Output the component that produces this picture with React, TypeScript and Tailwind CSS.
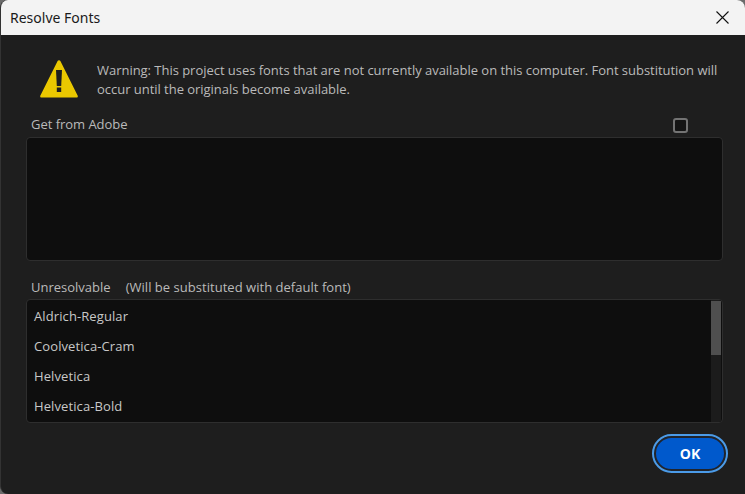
const fontStack = "font-['Open_Sans',sans-serif]"

const missingFonts = ['Aldrich-Regular', 'Coolvetica-Cram', 'Helvetica', 'Helvetica-Bold']

function WarningIcon() {
  return (
    <svg width="38" height="38" viewBox="0 0 38 38" className="shrink-0">
      <path d="M17.6 1 a1.6 1.6 0 0 1 2.8 0 L37.6 35.6 a1.2 1.2 0 0 1 -1.1 1.9 H1.5 a1.2 1.2 0 0 1 -1.1 -1.9 Z" fill="#eac800" />
      <path d="M16 10 H22 L21.2 26 H16.8 Z" fill="#1e1e1e" />
      <rect x="16.8" y="27.5" width="4.4" height="4.5" fill="#1e1e1e" />
    </svg>
  )
}

export default function App() {
  return (
    <div className="w-[745px] h-[494px] bg-[#6b6b6b]">
      <div className={`w-full h-full overflow-hidden bg-[#1e1e1e] rounded-t-lg rounded-bl-lg border-l border-[#333] flex flex-col text-[13px] tracking-[-0.03px] text-[#bababa] ${fontStack}`}>
        <div className="h-[35px] shrink-0 bg-[#f3f3f3] flex items-center justify-between pl-[9px] pr-[16px]">
          <span className="text-[14px] tracking-normal text-[#1a1a1a] font-['Noto_Sans',sans-serif]">Resolve Fonts</span>
          <svg width="13" height="13" viewBox="0 0 13 13" className="text-[#111]">
            <path d="M0.5 0.5 L12.5 12.5 M12.5 0.5 L0.5 12.5" stroke="currentColor" strokeWidth="1.1" fill="none" />
          </svg>
        </div>

        <div className="flex-1 flex flex-col pl-[25px] pr-[22px]">
          <div className="flex items-start gap-[19px] pl-[14px] pt-[25px] h-[78px]">
            <WarningIcon />
            <p className="leading-[19px] pt-[1px] w-[630px]">
              Warning: This project uses fonts that are not currently available on this computer. Font substitution will occur until the originals become available.
            </p>
          </div>

          <div className="flex items-center justify-between h-[24px] pl-[5px] pr-[35px]">
            <span>Get from Adobe</span>
            <span className="w-[15px] h-[15px] rounded-[3px] border-2 border-[#737373] bg-[#141414]" />
          </div>
          <div className="h-[124px] rounded-[4px] border border-[#2e2e2e] bg-[#0e0e0e]" />

          <div className="mt-[15px] h-[23px] pl-[5px] flex items-center gap-[15px] tracking-normal">
            <span>Unresolvable</span>
            <span className="tracking-[0.03px]">(Will be substituted with default font)</span>
          </div>
          <div className="h-[124px] rounded-[4px] border border-[#2e2e2e] bg-[#0e0e0e] flex overflow-hidden">
            <ul className="flex-1 pl-[7px] text-[#c8c8c8] tracking-[0.1px]">
              {missingFonts.map((name) => (
                <li key={name} className="h-[30px] flex items-center first:mt-[2px]">{name}</li>
              ))}
            </ul>
            <div className="w-[10px] mr-[1px] pt-[1px] bg-[#1c1c1c]">
              <div className="h-[54px] bg-[#4f4f4f]" />
            </div>
          </div>

          <div className="flex justify-end mt-[13px] -mr-[3px]">
            <button className="w-[72px] h-[35px] rounded-full bg-[#0059cc] text-white font-bold text-[14px] tracking-normal border-2 border-[#20242c] outline-2 outline-[#4b9be8]">
              OK
            </button>
          </div>
        </div>
      </div>
    </div>
  )
}
